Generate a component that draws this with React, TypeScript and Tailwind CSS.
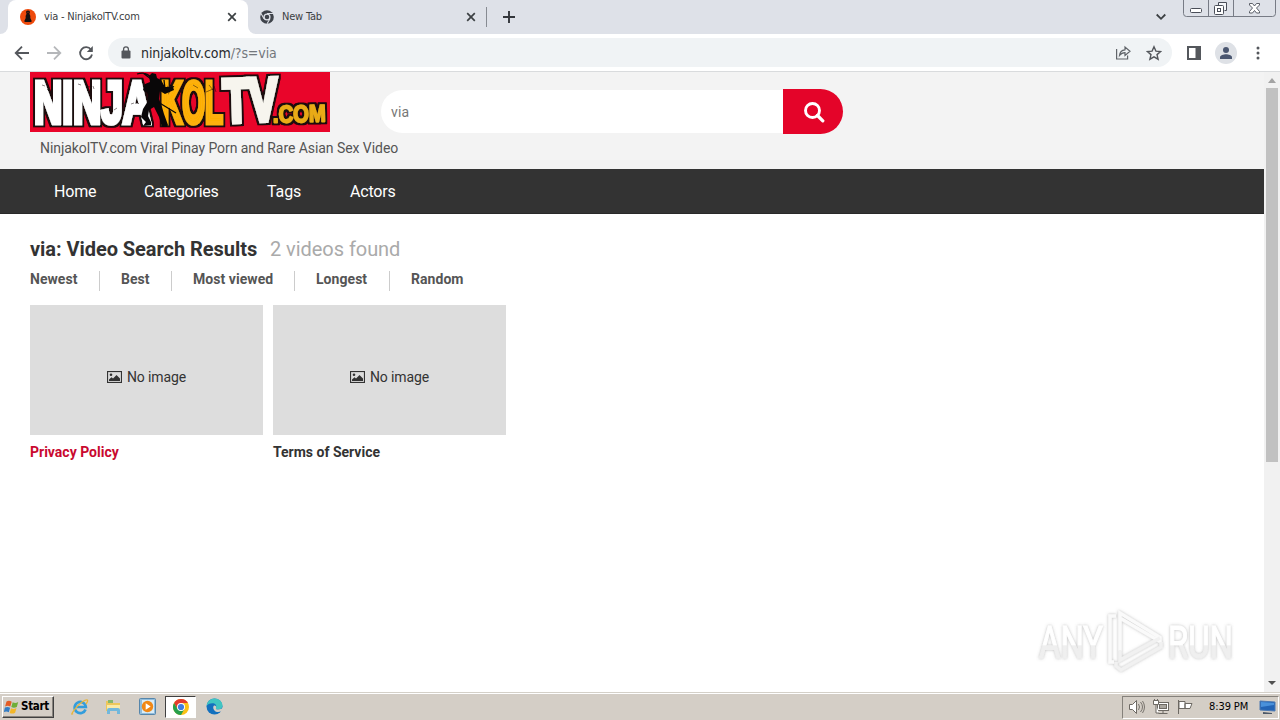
import React from "react";

const uiFont = "font-['DejaVu_Sans_Condensed','DejaVu_Sans',sans-serif]";

function CloseX() {
  return (
    <svg width="10" height="10" viewBox="0 0 10 10" stroke="#3c4043" strokeWidth="1.7" fill="none">
      <path d="M1.2 1.2l7.6 7.6M8.8 1.2L1.2 8.8" />
    </svg>
  );
}

function NinjaFavicon() {
  return (
    <svg width="16" height="16" viewBox="0 0 16 16">
      <circle cx="8" cy="8" r="8" fill="#ee4a0c" />
      <path d="M8 1.500c1.400 0 2.100.8 1.900 2L9.400 5c.9 1 1.100 2.400.9 4l1.500 3.200c-.8 1.200-6.800 1.200-7.600 0L5.700 9c-.2-1.600 0-3 .9-4l-.5-1.500c-.2-1.200.5-2 1.900-2z" fill="#151010" />
      <circle cx="8" cy="3.400" r=".6" fill="#8c2a0c" />
    </svg>
  );
}

function ChromeMono() {
  return (
    <svg width="14" height="14" viewBox="0 0 16 16">
      <circle cx="8" cy="8" r="7.800" fill="#3f434b" />
      <circle cx="8" cy="8" r="4.100" fill="#dee1e8" />
      <circle cx="8" cy="8" r="2.600" fill="#3f434b" />
      <path d="M8 4.100h7M4.600 10L1.200 4M11.400 10L8 15.800" stroke="#dee1e8" strokeWidth="1.200" />
    </svg>
  );
}

function TabStrip() {
  return (
    <div className={`flex h-[34px] bg-[#dee1e8] text-[11px] text-[#3c4043] ${uiFont}`}>
      <div className="flex w-2 items-end bg-white"><div className="h-full w-full rounded-br-lg bg-[#dee1e8]" /></div>
      <div className="flex w-[240px] items-center rounded-t-lg bg-white pl-3">
        <NinjaFavicon />
        <span className="mt-px ml-2 w-[183px] tracking-[-0.2px] whitespace-nowrap">via - NinjakolTV.com</span>
        <CloseX />
      </div>
      <div className="w-2 bg-white"><div className="h-full w-full rounded-bl-lg bg-[#dee1e8]" /></div>
      <div className="flex w-[230px] items-center pl-[4px]">
        <ChromeMono />
        <span className="mt-px ml-2 w-[184px] tracking-[-0.2px] whitespace-nowrap">New Tab</span>
        <CloseX />
      </div>
      <div className="mt-[7px] h-[20px] w-px bg-[#878b92]" />
      <svg className="mt-[11px] ml-[16px]" width="12" height="12" viewBox="0 0 12 12" stroke="#33363b" strokeWidth="1.900">
        <path d="M0 6h12M6 0v12" />
      </svg>
      <svg className="mt-[13px] ml-[641px]" width="10" height="8" viewBox="0 0 10 8" fill="none" stroke="#3c4043" strokeWidth="1.800">
        <path d="M.7 1.500L5 5.800l4.300-4.300" />
      </svg>
      <svg className="ml-[17px]" width="93" height="17" viewBox="0 0 93 17" fill="none" stroke="#777b85">
        <path d="M.5 0v13.500q0 3 3 3h86q3 0 3-3V0M25.500 0v16M50.500 0v16" />
        <g stroke="#4a4e58">
          <rect x="7.500" y="8.500" width="11" height="4" rx="1" fill="#fff" />
          <path d="M35.500 5.500v-3h8v8h-2" fill="#f4f6f9" />
          <rect x="31.500" y="5.500" width="9" height="9" rx="1" fill="#fff" />
          <rect x="34.500" y="8.500" width="3" height="3" />
          <path d="M66.500 3.500h3l2 2.500 2-2.500h3v1.500L73.500 8l3 3.500v1.500h-3l-2-2.500-2 2.500h-3v-1.500l3-3.500-3-3z" fill="#fff" strokeWidth=".9" />
        </g>
      </svg>
    </div>
  );
}

function Toolbar() {
  return (
    <div className="flex h-[38px] items-center border-b border-[#d9dbdd] bg-white">
      <svg className="ml-[14px]" width="80" height="16" viewBox="0 0 80 16" fill="none" strokeWidth="1.800">
        <path d="M15 8H2M8 1.700L1.700 8 8 14.300" stroke="#54575c" />
        <path d="M33 8h13M40 1.700L46.300 8 40 14.300" stroke="#b5b7ba" />
        <path d="M77 4.700A6 6 0 1 0 78 9.500" stroke="#54575c" />
        <path d="M78.800 1v6h-6z" fill="#54575c" />
      </svg>
      <div className={`ml-[14px] flex h-[29px] w-[1064px] items-center rounded-full bg-[#f0f3f5] ${uiFont}`}>
        <svg className="ml-[13px]" width="10" height="13" viewBox="0 0 10 13">
          <rect x=".5" y="4.500" width="9" height="8" rx="1" fill="#54575c" />
          <path d="M2.600 5V3.200a2.400 2.400 0 0 1 4.800 0V5" fill="none" stroke="#54575c" strokeWidth="1.300" />
        </svg>
        <span className="mt-px ml-[10px] w-[974px] text-[14px] tracking-[-0.09px] text-[#27292c] whitespace-nowrap">ninjakoltv.com<span className="text-[#73777c]">/?s=via</span></span>
        <svg width="16" height="15" viewBox="0 0 16 15" fill="none" stroke="#606469" strokeWidth="1.200">
          <path d="M1.600 4v10h11v-3.500" />
          <path d="M4.500 10.500c.3-3.500 2.200-5.500 5.500-5.700V2l5 4.300-5 4.200V7.700c-2.400 0-4 .8-5.500 2.800z" />
        </svg>
        <svg className="ml-[15px]" width="16" height="16" viewBox="0 0 16 16" fill="none" stroke="#54575c" strokeWidth="1.400">
          <path d="M8 1.800l1.900 4.300 4.700.4-3.600 3.100 1.100 4.600L8 11.800l-4.100 2.400L5 9.600 1.400 6.500l4.700-.4z" />
        </svg>
      </div>
      <svg className="ml-[15px]" width="14" height="14" viewBox="0 0 14 14">
        <rect x="1" y="1" width="12" height="12" fill="#fff" stroke="#54575c" strokeWidth="2" />
        <rect x="8.500" y="0" width="5.500" height="14" fill="#54575c" />
      </svg>
      <svg className="ml-[14px]" width="22" height="22" viewBox="0 0 22 22">
        <circle cx="11" cy="11" r="11" fill="#dee1e6" />
        <circle cx="11" cy="8" r="3" fill="#4a5670" />
        <path d="M5 17v-1.800c0-2 3.600-3 6-3s6 1 6 3V17z" fill="#4a5670" />
      </svg>
      <svg className="ml-[19px]" width="4" height="14" viewBox="0 0 4 14" fill="#54575c">
        <circle cx="2" cy="2" r="1.500" /><circle cx="2" cy="7" r="1.500" /><circle cx="2" cy="12" r="1.500" />
      </svg>
    </div>
  );
}

function Logo() {
  return (
    <svg className="shrink-0" width="300" height="60" viewBox="0 0 300 60">
      <defs>
        <filter id="outline" x="-5%" y="-10%" width="110%" height="120%">
          <feMorphology in="SourceAlpha" operator="dilate" radius="2" result="fat" />
          <feFlood floodColor="#1c0709" />
          <feComposite in2="fat" operator="in" result="edge" />
          <feMerge><feMergeNode in="edge" /><feMergeNode in="SourceGraphic" /></feMerge>
        </filter>
      </defs>
      <rect width="300" height="60" fill="#e9052a" />
      <g filter="url(#outline)" fontFamily="'Liberation Sans',Arial,sans-serif" fontWeight="700" strokeWidth="3" strokeLinejoin="miter" strokeMiterlimit="3">
        <text transform="translate(4 50.500) scale(1 1.550)" fontSize="38" textLength="117" lengthAdjust="spacingAndGlyphs" fill="#fff" stroke="#fff">NINJA</text>
        <text transform="translate(131 50.500) scale(1 1.550)" fontSize="38" textLength="62" lengthAdjust="spacingAndGlyphs" fill="#fdb007" stroke="#fdb007">KOL</text>
      </g>
      <g filter="url(#outline)" fontFamily="'Liberation Sans',Arial,sans-serif" fontWeight="700" strokeWidth="3.500">
        <text transform="translate(194 50) rotate(-2) scale(1 1.550)" fontSize="39" textLength="54" lengthAdjust="spacingAndGlyphs" fill="#f7f5ee" stroke="#f7f5ee">TV</text>
      </g>
      <g filter="url(#outline)" fontFamily="'Liberation Sans',Arial,sans-serif" fontWeight="700" strokeWidth="1.600" strokeLinejoin="round">
        <text transform="translate(243 50.500) rotate(-1)" fontSize="24" textLength="53" lengthAdjust="spacingAndGlyphs" fill="#e9ab16" stroke="#e9ab16">.COM</text>
      </g>
      <path d="M12 13l3 1M17 17l2 2M48 12l3 1M57 14l3 1M63 14l1 3M84 38l3-2M101 32l3-1M107 30l2 2M137 14l3 2M163 13l5 3M176 20l7-3M179 13l4 5M184 14l2 6" stroke="#160a0c" fill="none" strokeWidth=".7" opacity=".7" />
      <path d="M119 4l3-3 4 1 1 4 4 2 4 7 8 0 1 3-9 4-5-3-1 8 3 8 2 7 4 11-1 2h-5l-3-10-5-10-5 3-1 6 3 6v3l-8 1 3-4-5-5 2-8 5-8-1-8-4-3 2-6 5-2z" fill="#090708" />
      <path d="M107 2q10-3 15 5M113 1l8 6M128 30l18 11M134 8l1 9M140 13l4 2" stroke="#090708" strokeWidth="1.300" fill="none" />
    </svg>
  );
}

function SiteHeader() {
  return (
    <header className="h-[97px] bg-[#f3f3f3] pl-[30px]">
      <div className="flex h-[60px]">
        <Logo />
        <div className="mt-[17px] ml-[51px] flex h-[45px] items-center">
          <div className="flex h-[43px] w-[402px] items-center rounded-l-full bg-white pt-px pl-[10px] text-[14px] tracking-[0.2px] text-[#777]">via</div>
          <div className="flex h-[45px] w-[60px] items-center justify-center rounded-r-full bg-[#e40429]">
            <svg className="ml-[1px]" width="22" height="22" viewBox="0 0 22 22" fill="none" stroke="#fff">
              <circle cx="9.500" cy="9.500" r="7" strokeWidth="2.900" />
              <path d="M14.500 14.500l5.300 5.300" strokeWidth="3.300" strokeLinecap="round" />
            </svg>
          </div>
        </div>
      </div>
      <p className="mt-[6px] ml-[10px] text-[14px] leading-5 tracking-[-0.06px] text-[#555]">NinjakolTV.com Viral Pinay Porn and Rare Asian Sex Video</p>
    </header>
  );
}

function VideoCard({ title, active }: { title: string; active?: boolean }) {
  return (
    <article className="w-[233px]">
      <div className="flex h-[130px] items-center justify-center bg-[#ddd] pt-[14px] text-[14px] text-[#333]">
        <svg className="mr-[5px]" width="15" height="12" viewBox="0 0 15 12">
          <rect x=".5" y=".5" width="14" height="11" fill="none" stroke="#333" strokeWidth="1.200" />
          <circle cx="4" cy="3.700" r="1.300" fill="#333" />
          <path d="M2 10V8.500l2.500-2.300L6 7.500 9.500 4l3.500 3.500V10z" fill="#333" />
        </svg>
        <span className="tracking-[-0.1px]">No image</span>
      </div>
      <h2 className={`mt-[7px] text-[14px] leading-5 font-bold ${active ? "text-[#c9082f]" : "text-[#333]"}`}>{title}</h2>
    </article>
  );
}

const filters = [
  { label: "Newest", box: "w-[69px]" },
  { label: "Best", box: "w-[50px]" },
  { label: "Most viewed", box: "w-[101px]" },
  { label: "Longest", box: "w-[73px]" },
  { label: "Random", box: "w-[70px]" },
];

function Watermark() {
  return (
    <svg className="absolute top-[535px] left-[1030px]" width="210" height="70" viewBox="0 0 210 70">
      <defs>
        <linearGradient id="mark" x1="0" y1="0" x2="0" y2="1"><stop offset=".54" stopColor="#fff" /><stop offset=".56" stopColor="#efefef" /></linearGradient>
        <filter id="glow" x="-20%" y="-20%" width="140%" height="140%"><feDropShadow dx="0" dy="0" stdDeviation="1.600" floodColor="#777" floodOpacity=".5" /></filter>
      </defs>
      <g filter="url(#glow)" fill="url(#mark)" stroke="url(#mark)" strokeWidth=".8" fontFamily="'Roboto',sans-serif">
        <text transform="translate(9 51) scale(1 1.320)" fontSize="33" textLength="64" lengthAdjust="spacingAndGlyphs">ANY</text>
        <text transform="translate(138 51) scale(1 1.320)" fontSize="33" textLength="65" lengthAdjust="spacingAndGlyphs">RUN</text>
      </g>
      <g filter="url(#glow)" fill="none" stroke="#fafafa" strokeWidth="3.500">
        <path d="M86 9h-6v46h4" />
        <path d="M90 44V6l40 24.500v4L90 11" />
        <path d="M90 43v10l40-22M86 55v4l5 4 40-23v-5" stroke="#f1f1f1" />
      </g>
    </svg>
  );
}

function Page() {
  return (
    <main className="relative flex h-[620px] bg-white font-['Roboto',sans-serif]">
      <div className="w-[1264px]">
        <SiteHeader />
        <nav className="flex h-[45px] items-center border-b border-[#292929] bg-[#333] pt-[2px] pl-[54px] text-[16px] text-white">
          <a className="w-[90px] tracking-[-0.2px]">Home</a><a className="w-[123px] tracking-[-0.24px]">Categories</a><a className="w-[83px] tracking-[-0.1px]">Tags</a><a className="tracking-[-0.2px]">Actors</a>
        </nav>
        <section className="px-[30px] pt-[21px]">
          <h1 className="flex text-[20px] leading-[28px] font-bold text-[#333]">
            <span className="w-[240px] tracking-[-0.05px] whitespace-nowrap">via: Video Search Results</span>
            <span className="font-normal tracking-[-0.05px] text-[#aaa]">2 videos found</span>
          </h1>
          <div className="mt-[6px] flex h-[22px] text-[14px] leading-5 font-bold tracking-[0.05px] text-[#555]">
            {filters.map((f, i) => (
              <div key={f.label} className="flex whitespace-nowrap">
                <span className={f.box}>{f.label}</span>
                {i < filters.length - 1 && <span className="mt-[2px] mr-[21px] h-5 w-px bg-[#ccc]" />}
              </div>
            ))}
          </div>
          <div className="mt-[14px] flex gap-[10px]">
            <VideoCard title="Privacy Policy" active />
            <VideoCard title="Terms of Service" />
          </div>
        </section>
      </div>
      <div className="flex w-4 flex-col items-center bg-[#f1f1f1]">
        <svg className="h-4 w-4 shrink-0" viewBox="0 0 16 16"><path d="M4 11l4-5 4 5z" fill="#a3a3a3" /></svg>
        <div className="h-[374px] w-3 bg-[#c1c1c1]" />
        <svg className="mt-auto mb-px h-4 w-4 shrink-0" viewBox="0 0 16 16"><path d="M4 6l4 4 4-4z" fill="#505050" /></svg>
      </div>
      <Watermark />
    </main>
  );
}

function Taskbar() {
  return (
    <footer className={`flex h-[28px] items-center border-t border-[#d4d0c8] bg-[#d4cec6] shadow-[inset_0_1px_0_#fff] text-[11px] text-black ${uiFont}`}>
      <div className="ml-[2px] mt-px flex h-[22px] w-[52px] items-center border-t border-r border-b border-l border-t-white border-r-[#404040] border-b-[#404040] border-l-white pl-px shadow-[inset_-1px_-1px_0_#88847e]">
        <svg className="shrink-0" width="16" height="16" viewBox="0 0 16 16">
          <path d="M2.500 2.500c2-1.200 3.500-.8 5.200.2L6.300 7.500c-1.700-1-3.300-1.100-5.200-.1z" fill="#e45c24" />
          <path d="M8.700 3.200c1.800 1 3.500 1 5.500-.2L12.800 8c-2 1.100-3.700 1-5.500.1z" fill="#6fae38" />
          <path d="M.9 8.600c2-1.100 3.500-.8 5.200.2l-1.300 4.500c-1.700-1-3.300-1.100-5-.1z" fill="#347dc4" />
          <path d="M7 9.200c1.800 1 3.500 1 5.500-.2l-1.400 4.700c-2 1.200-3.600 1.100-5.400.2z" fill="#f3b729" />
        </svg>
        <span className="ml-px text-[11.5px] font-bold tracking-[-0.3px]">Start</span>
      </div>
      <svg className="ml-[17px]" width="18" height="18" viewBox="0 0 18 18" fill="none">
        <path d="M14.500 11.500A5.600 5.600 0 1 1 14.800 9H5.500" stroke="#329ddc" strokeWidth="2.700" />
        <path d="M2 15.500C-2 19 5 8 11 4c6-4 7-2 4 2" stroke="#e8b63b" strokeWidth="1.300" />
      </svg>
      <svg className="ml-[16px]" width="17" height="18" viewBox="0 0 17 18">
        <path d="M1 3h5l1 2h8v8H1z" fill="#edc75b" /><path d="M3 2h5v3H3z" fill="#87b76a" />
        <path d="M2 7h13v6H2z" fill="#faeaa6" /><path d="M2 16v-4q0-2 2-2h9q2 0 2 2v4h-3v-3H5v3z" fill="#72b8dc" />
      </svg>
      <svg className="ml-[17px]" width="17" height="17" viewBox="0 0 17 17">
        <rect x=".5" y=".5" width="16" height="16" rx="1" fill="#91bddc" stroke="#5686ab" />
        <rect x="3" y="2" width="12" height="13" fill="#d9ecf7" />
        <circle cx="8.500" cy="8.500" r="5.700" fill="#f08816" /><path d="M6.700 5.200v6.600l5-3.300z" fill="#fff" />
      </svg>
      <div className="ml-[9px] flex h-[22px] w-[31px] items-center justify-center border border-t-[#404040] border-r-white border-b-white border-l-[#404040] bg-white">
        <svg width="16" height="16" viewBox="0 0 16 16">
          <circle cx="8" cy="8" r="8" fill="#fbc116" />
          <path d="M1.070 4A8 8 0 0 1 14.930 4H8L4.540 10z" fill="#e33b2e" />
          <path d="M1.070 4A8 8 0 0 0 8 16l3.460-6H4.540z" fill="#269f4c" />
          <circle cx="8" cy="8" r="4" fill="#fff" /><circle cx="8" cy="8" r="3.100" fill="#3f7de0" />
        </svg>
      </div>
      <svg className="ml-[10px]" width="17" height="17" viewBox="0 0 17 17">
        <circle cx="8.500" cy="8.500" r="8" fill="#1370be" />
        <path d="M.6 8C1 3.500 4.500.500 8.500.500c4.500 0 8 3.300 8 7 0 2.500-2 4-4 4-2 0-3-.7-2.500-1.600C11 7 9 5.300 6.500 5.300 3.500 5.300 1.300 6.500.6 8z" fill="#40c5c2" />
        <path d="M10 9.900c-.5.900.5 1.600 2.500 1.600 1.500 0 3-.5 4.500-1.700v2c-1.500 2-4.500 2.900-7.500 1.700C7 11.500 6.500 9 8 7.500c1.500-.3 2.700.8 2 2.400z" fill="#d4cec6" />
      </svg>
      <div className="ml-auto mr-px mt-px flex h-[23px] w-[157px] items-center border border-t-[#85817b] border-r-white border-b-white border-l-[#85817b]">
        <svg className="ml-[6px]" width="66" height="18" viewBox="0 0 66 18" fill="#fff" stroke="#6d6963">
          <path d="M.5 6.500h3l4-4v13l-4-4h-3z" />
          <path d="M9.500 6q2 3 0 6M11.500 4q4 5 0 10M13.500 3q4 6 0 12" fill="none" strokeWidth=".9" />
          <rect x="28.500" y="4.500" width="11" height="8" /><rect x="30.500" y="6.500" width="7" height="4" fill="#aaa69f" />
          <path d="M29.500 15.500h9M34 13v2M24.500 2.500h5v4h-5zM25.500 1v2M28.500 1v2M27 7v8h3" />
          <path d="M49.500 2v14M50 3.500h6v7h-6zM56 5.500h7l-2 5h-5z" />
        </svg>
        <span className="ml-[14px] w-[50px] text-[11px] tracking-[-0.1px] whitespace-nowrap">8:39 PM</span>
        <svg width="17" height="15" viewBox="0 0 17 15">
          <path d="M1 1l15 1v9L1 10z" fill="#2364b5" stroke="#4e7ab2" />
          <path d="M2 2l13 1v2L2 7z" fill="#4a91da" />
          <path d="M4 12l9 1v1H4z" fill="#4d5968" />
        </svg>
      </div>
    </footer>
  );
}

export default function App() {
  return (
    <div className="h-[720px] w-[1280px] overflow-hidden bg-white">
      <TabStrip />
      <Toolbar />
      <Page />
      <Taskbar />
    </div>
  );
}
